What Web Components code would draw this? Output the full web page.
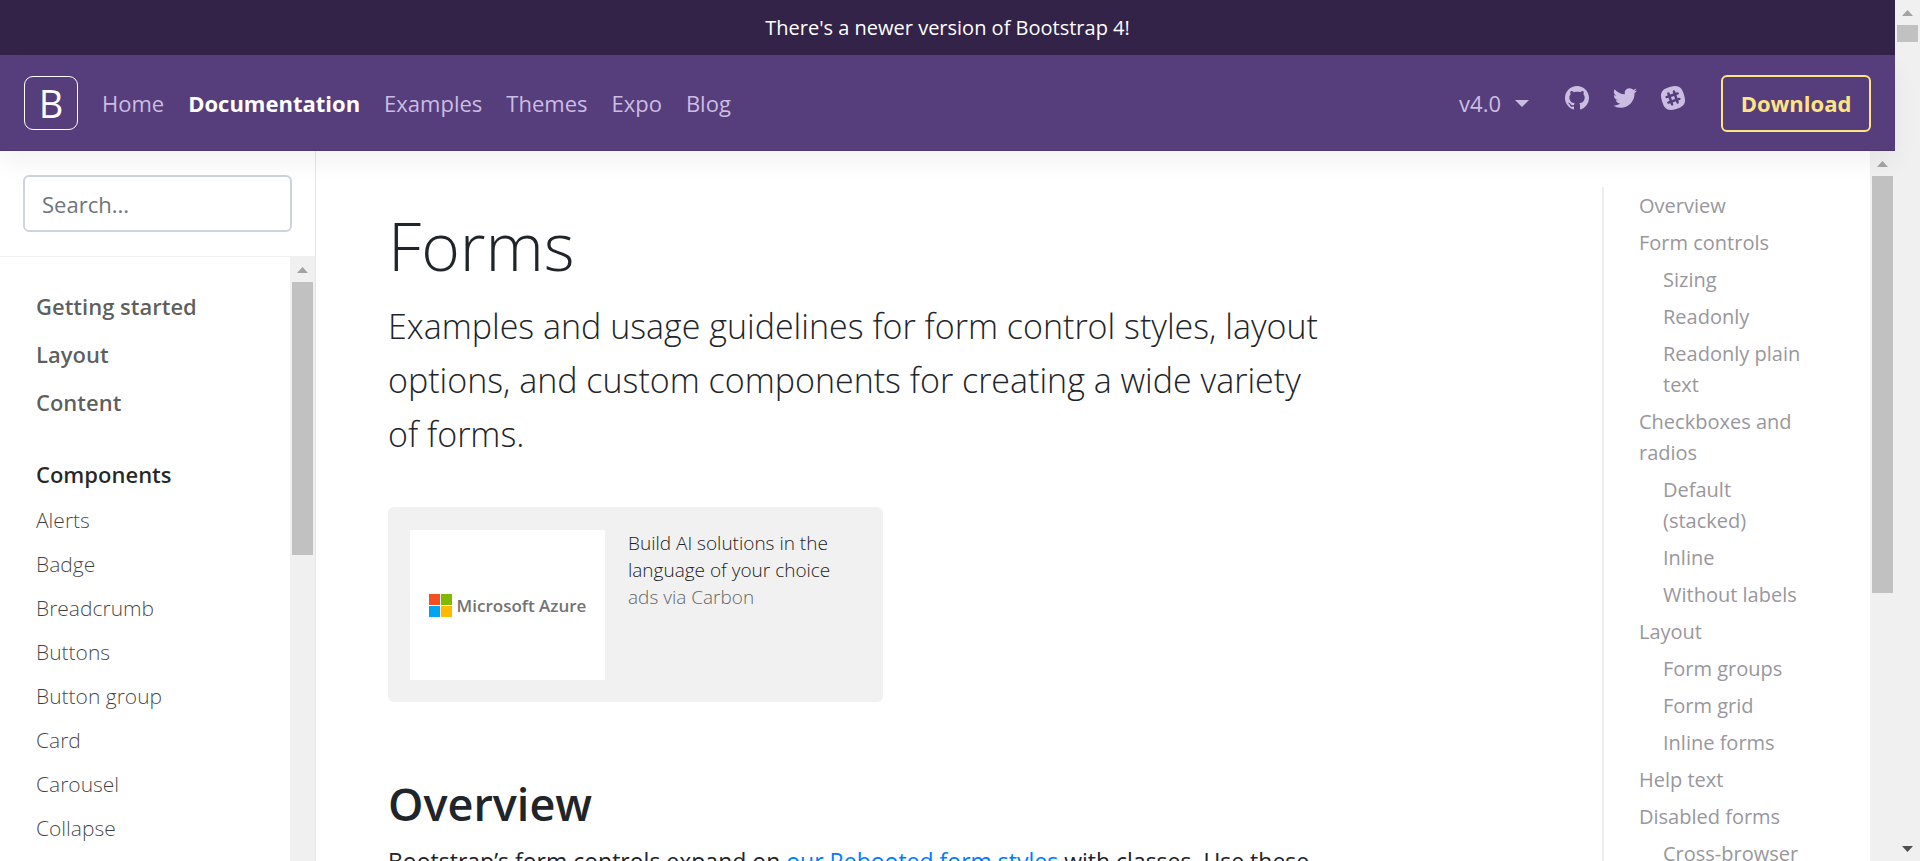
<!DOCTYPE html>
<html lang="en">
<head>
<meta charset="utf-8">
<meta name="viewport" content="width=device-width, initial-scale=1">
<title>Forms · Bootstrap</title>
<style>
  html, body { margin: 0; height: 100%; overflow: hidden; }
  body { font: 400 22px/36px "Open Sans", "Noto Sans", sans-serif; color: #212529; background: #fff; }
</style>
</head>
<body>
<docs-page>
  <version-banner slot="banner" href="#latest">There's a newer version of Bootstrap 4!</version-banner>
  <docs-navbar slot="navbar"></docs-navbar>
  <docs-sidebar slot="sidebar"></docs-sidebar>
  <docs-content slot="content">
    <carbon-ad slot="ad"></carbon-ad>
  </docs-content>
  <docs-toc slot="toc"></docs-toc>
</docs-page>

<script>
class ShadowElement extends HTMLElement {
  connectedCallback() {
    if (this.shadowRoot) return;
    this.attachShadow({ mode: 'open' }).innerHTML =
      '<style>*{box-sizing:border-box}a{text-decoration:none;color:inherit}ul{list-style:none;margin:0;padding:0}</style>' + this.render();
  }
}

customElements.define('docs-page', class extends ShadowElement {
  render() {
    return `<style>
      :host { display: flex; height: 100vh; overflow: hidden; }
      .view { flex: 1; min-width: 0; display: flex; flex-direction: column; }
      .row { flex: 1; min-height: 0; display: flex; }
    </style>
    <div class="view">
      <slot name="banner"></slot>
      <slot name="navbar"></slot>
      <div class="row">
        <slot name="sidebar"></slot>
        <slot name="content"></slot>
        <slot name="toc"></slot>
        <scroll-track style="--thumb: 417; --rest: 268"></scroll-track>
      </div>
    </div>
    <scroll-track style="--thumb: 17; --rest: 794" end></scroll-track>`;
  }
});

customElements.define('scroll-track', class extends ShadowElement {
  render() {
    return `<style>
      :host { display: flex; flex-direction: column; flex: none; width: 25px; background: #f0f0f0; }
      .arrow { flex: none; height: 25px; display: flex; align-items: center; justify-content: center; }
      .thumb { flex: var(--thumb) 0 0; margin: 0 2px; background: #c1c1c1; }
      .rest { flex: var(--rest) 0 0; }
      svg { display: block; }
    </style>
    <div class="arrow"><svg width="11" height="6" viewBox="0 0 11 6"><path d="M0 6 5.5 0 11 6z" fill="#a3a3a3"/></svg></div>
    <div class="thumb"></div><div class="rest"></div>
    ${this.hasAttribute('end') ? '<div class="arrow"><svg width="11" height="6" viewBox="0 0 11 6"><path d="M0 0 5.5 6 11 0z" fill="#505050"/></svg></div>' : ''}`;
  }
});

customElements.define('version-banner', class extends ShadowElement {
  render() {
    return `<style>
      :host { display: block; flex: none; background: #332348; color: #fff; }
      a { display: block; text-align: center; font-size: 20px; line-height: 55px; }
    </style><a href="${this.getAttribute('href')}"><slot></slot></a>`;
  }
});

customElements.define('docs-navbar', class extends ShadowElement {
  render() {
    return `<style>
      :host { display: block; flex: none; position: relative; z-index: 1; background: #563d7c; color: #cbbde2;
        box-shadow: 0 12px 24px rgba(0,0,0,.05), inset 0 -1px 0 rgba(0,0,0,.1); }
      header { display: flex; align-items: center; height: 96px; padding: 0 24px; }
      .logo { width: 54px; height: 54px; border: 1px solid #fff; border-radius: 9px; color: #fff;
        font-size: 38px; line-height: 52px; text-align: center; }
      .links { display: flex; gap: 24px; margin-left: 24px; }
      .links .active { color: #fff; font-weight: 700; }
      .version { display: flex; align-items: center; gap: 14px; margin-left: auto; padding: 0; border: 0;
        background: none; color: inherit; font: inherit; }
      .caret { border: 7px solid transparent; border-top-color: currentColor; border-bottom: 0; }
      .icons { display: flex; gap: 24px; margin: 0 36px; padding-bottom: 10px; }
      .icons a, svg { display: block; }
      .download { border: 2px solid #ffe484; border-radius: 6px; width: 150px; line-height: 53px;
        text-align: center; color: #ffe484; font-weight: 700; }
    </style>
    <header>
      <a class="logo" href="#home" aria-label="Bootstrap">B</a>
      <nav><ul class="links">
        <li><a href="#home">Home</a></li><li><a class="active" href="#docs">Documentation</a></li>
        <li><a href="#examples">Examples</a></li><li><a href="#themes">Themes</a></li>
        <li><a href="#expo">Expo</a></li><li><a href="#blog">Blog</a></li>
      </ul></nav>
      <button class="version" type="button">v4.0<span class="caret"></span></button>
      <div class="icons">
        <a href="#github" aria-label="GitHub"><svg width="24" height="24" viewBox="0 0 16 16" fill="currentColor"><path fill-rule="evenodd" d="M8 0C3.58 0 0 3.58 0 8c0 3.54 2.29 6.53 5.47 7.59.4.07.55-.17.55-.38 0-.19-.01-.82-.01-1.49-2.01.37-2.53-.49-2.69-.94-.09-.23-.48-.94-.82-1.13-.28-.15-.68-.52-.01-.53.63-.01 1.08.58 1.23.82.72 1.21 1.87.87 2.33.66.07-.52.28-.87.51-1.07-1.78-.2-3.64-.89-3.64-3.95 0-.87.31-1.59.82-2.15-.08-.2-.36-1.02.08-2.12 0 0 .67-.21 2.2.82.64-.18 1.32-.27 2-.27s1.36.09 2 .27c1.53-1.04 2.2-.82 2.2-.82.44 1.1.16 1.92.08 2.12.51.56.82 1.27.82 2.15 0 3.07-1.87 3.75-3.65 3.95.29.25.54.73.54 1.48 0 1.07-.01 1.93-.01 2.2 0 .21.15.46.55.38A8.01 8.01 0 0 0 16 8c0-4.42-3.58-8-8-8z"/></svg></a>
        <a href="#twitter" aria-label="Twitter"><svg width="24" height="24" viewBox="0 0 512 416.32" fill="currentColor"><path d="M160.83 416.32c193.2 0 298.92-160.22 298.92-298.92 0-4.51 0-9-.2-13.52A214 214 0 0 0 512 49.38a212.93 212.93 0 0 1-60.44 16.6 105.7 105.7 0 0 0 46.3-58.19 209 209 0 0 1-66.79 25.37 105.09 105.09 0 0 0-181.73 71.91 116.12 116.12 0 0 0 2.66 24c-87.28-4.3-164.73-46.3-216.56-109.82A105.48 105.48 0 0 0 68 159.6a106.27 106.27 0 0 1-47.53-13.11v1.43a105.28 105.28 0 0 0 84.21 103.06 105.67 105.67 0 0 1-47.33 1.84 105.06 105.06 0 0 0 98.14 72.94A210.72 210.72 0 0 1 25 370.84a202.17 202.17 0 0 1-25-1.43 298.85 298.85 0 0 0 160.83 46.92"/></svg></a>
        <a href="#slack" aria-label="Slack"><svg width="24" height="24" viewBox="0 0 512 512" fill="currentColor"><path d="M210.787 234.832l68.31-22.883 22.1 65.977-68.309 22.882z"/><path d="M490.54 185.6C437.7 9.59 361.6-31.34 185.6 21.46S-31.3 150.4 21.46 326.4 150.4 543.3 326.4 490.54 543.34 361.6 490.54 185.6zM401.7 299.8l-33.15 11.05 11.46 34.38c4.5 13.92-2.87 29.06-16.78 33.56-2.87.82-6.14 1.64-9 1.23a27.32 27.32 0 0 1-24.56-18l-11.46-34.38-68.36 22.92 11.46 34.38c4.5 13.92-2.87 29.06-16.78 33.56-2.87.82-6.14 1.64-9 1.23a27.32 27.32 0 0 1-24.56-18l-11.46-34.43-33.15 11.05c-2.87.82-6.14 1.64-9 1.23a27.32 27.32 0 0 1-24.56-18c-4.5-13.92 2.87-29.06 16.78-33.56l33.12-11.03-22.1-65.9-33.15 11.05c-2.87.82-6.14 1.64-9 1.23a27.32 27.32 0 0 1-24.56-18c-4.48-13.93 2.89-29.07 16.81-33.58l33.15-11.05-11.46-34.38c-4.5-13.92 2.87-29.06 16.78-33.56s29.06 2.87 33.56 16.78l11.46 34.38 68.36-22.92-11.46-34.38c-4.5-13.92 2.87-29.06 16.78-33.56s29.06 2.87 33.56 16.78l11.47 34.42 33.15-11.05c13.92-4.5 29.06 2.87 33.56 16.78s-2.87 29.06-16.78 33.56L329.7 194.6l22.1 65.9 33.15-11.05c13.92-4.5 29.06 2.87 33.56 16.78s-2.88 29.07-16.81 33.57z"/></svg></a>
      </div>
      <a class="download" href="#download">Download</a>
    </header>`;
  }
});

customElements.define('docs-sidebar', class extends ShadowElement {
  render() {
    const items = ['Alerts', 'Badge', 'Breadcrumb', 'Buttons', 'Button group', 'Card', 'Carousel', 'Collapse'];
    const id = t => t.toLowerCase().replace(' ', '-');
    return `<style>
      :host { display: flex; flex-direction: column; flex: none; width: 315px; border-right: 1px solid #e5e5e5; }
      form { flex: none; padding: 24px 23px; border-bottom: 1px solid #f0f0f0; }
      input { display: block; width: 100%; height: 57px; padding: 0 17px; border: 2px solid #ced4da; border-radius: 6px;
        background: #fff; font: inherit; color: #495057; outline: 0; }
      input::placeholder { color: #6c757d; opacity: 1; }
      .scroll { flex: 1; min-height: 0; display: flex; }
      nav { flex: 1; overflow: hidden; padding: 25px 0 0 36px; }
      .head { display: block; padding: 6px 0; font-weight: 600; color: rgba(0,0,0,.65); }
      .active { margin-top: 24px; }
      .active > .head { color: rgba(0,0,0,.85); }
      .sub a { display: block; font-size: 21px; line-height: 44px; font-weight: 300; color: rgba(0,0,0,.75); }
    </style>
    <form><input type="search" placeholder="Search..." aria-label="Search for..."></form>
    <div class="scroll">
      <nav aria-label="Docs"><ul>
        <li><a class="head" href="#started">Getting started</a></li>
        <li><a class="head" href="#layout">Layout</a></li>
        <li><a class="head" href="#content">Content</a></li>
        <li class="active"><a class="head" href="#components">Components</a>
          <ul class="sub">${items.map(t => `<li><a href="#${id(t)}">${t}</a></li>`).join('')}</ul></li>
      </ul></nav>
      <scroll-track style="--thumb: 273; --rest: 306"></scroll-track>
    </div>`;
  }
});

customElements.define('docs-content', class extends ShadowElement {
  render() {
    return `<style>
      :host { display: block; flex: 1; min-width: 0; overflow: hidden; padding: 54px 46px 0 72px; }
      h1, h2, p { margin: 0; max-width: 80%; }
      h1 { font-size: 66px; line-height: 80px; font-weight: 300; }
      .lead { margin: 14px 0 46px; font-size: 34px; line-height: 54px; font-weight: 300; }
      h2 { margin: 75px 0 12px; font-size: 45px; line-height: 54px; font-weight: 600; }
      .intro { font-size: 23px; }
      p a { color: #007bff; }
    </style>
    <main>
      <h1>Forms</h1>
      <p class="lead">Examples and usage guidelines for form control styles, layout options, and custom components for creating a wide variety of forms.</p>
      <slot name="ad"></slot>
      <h2>Overview</h2>
      <p class="intro">Bootstrap’s form controls expand on <a href="#reboot">our Rebooted form styles</a> with classes. Use these</p>
    </main>`;
  }
});

customElements.define('carbon-ad', class extends ShadowElement {
  render() {
    return `<style>
      :host { display: flex; gap: 23px; width: 495px; padding: 23px 22px 22px; border-radius: 6px; background: #f1f1f1;
        font-size: 19px; line-height: 27px; font-weight: 300; box-sizing: border-box; }
      .image { flex: none; width: 195px; height: 150px; display: flex; align-items: center; justify-content: center; gap: 5px;
        background: #fff; color: #737373; font-size: 17px; font-weight: 600; white-space: nowrap; }
      .text { color: #222; }
      .text a { display: block; }
      .text .poweredby { color: #666; }
    </style>
    <a class="image" href="#azure"><svg width="23" height="23" viewBox="0 0 23 23"><path fill="#f25022" d="M0 0h11v11H0z"/><path fill="#7fba00" d="M12 0h11v11H12z"/><path fill="#00a4ef" d="M0 12h11v11H0z"/><path fill="#ffb900" d="M12 12h11v11H12z"/></svg>Microsoft Azure</a>
    <div class="text"><a href="#azure">Build AI solutions in the language of your choice</a><a class="poweredby" href="#carbon">ads via Carbon</a></div>`;
  }
});

customElements.define('docs-toc', class extends ShadowElement {
  render() {
    const toc = [['Overview'], ['Form controls', 'Sizing', 'Readonly', 'Readonly plain text'],
      ['Checkboxes and radios', 'Default (stacked)', 'Inline', 'Without labels'],
      ['Layout', 'Form groups', 'Form grid', 'Inline forms'], ['Help text'], ['Disabled forms', 'Cross-browser']];
    const link = t => `<a href="#${t.toLowerCase().replace(/\W+/g, '-')}">${t}</a>`;
    return `<style>
      :host { display: block; flex: none; width: 268px; overflow: hidden; padding-top: 36px; }
      nav { border-left: 2px solid #eee; padding: 0 54px 0 35px; font-size: 20px; line-height: 31px; color: #99979c; }
      a { display: block; padding: 3px 0; }
      ul ul { padding-left: 24px; }
    </style>
    <nav aria-label="On this page"><ul>${toc.map(([t, ...subs]) =>
      `<li>${link(t)}${subs.length ? `<ul>${subs.map(s => `<li>${link(s)}</li>`).join('')}</ul>` : ''}</li>`).join('')}</ul></nav>`;
  }
});
</script>
</body>
</html>
